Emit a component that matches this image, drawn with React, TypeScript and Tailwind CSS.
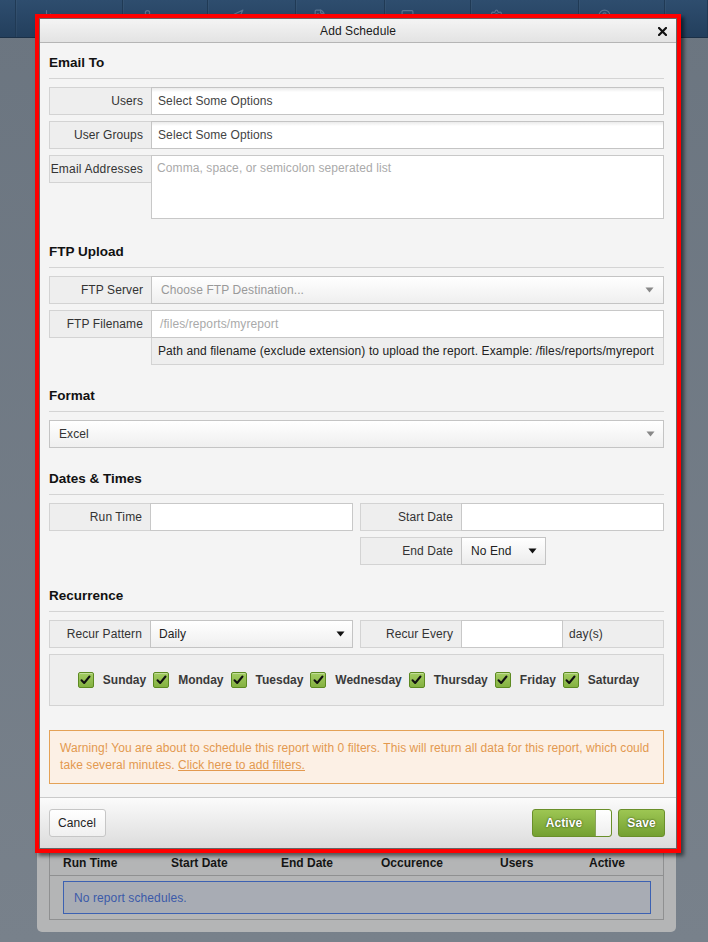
import React from "react";
import { User, Navigation, FileText, Monitor, Settings, CircleUser, BarChart2 } from "lucide-react";

const navItems = [
  { w: 16, pl: 0, Icon: null },
  { w: 107, pl: 24, Icon: BarChart2 },
  { w: 85, pl: 18, Icon: User },
  { w: 88, pl: 23, Icon: Navigation },
  { w: 89, pl: 17, Icon: FileText },
  { w: 86, pl: 16, Icon: Monitor },
  { w: 108, pl: 19, Icon: Settings },
  { w: 86, pl: 19, Icon: CircleUser },
  { w: 43, pl: 0, Icon: null },
];

function SectionHeading({ title }: { title: string }) {
  return (
    <div>
      <h3 className="text-[13.5px] leading-[18px] font-bold text-[#111] tracking-normal">{title}</h3>
      <div className="mt-[6px] mb-[8px] h-px bg-[#d4d4d4]" />
    </div>
  );
}

function Label({ children, w = "w-[102px]", alignTop = false }: { children: React.ReactNode; w?: string; alignTop?: boolean }) {
  return (
    <div
      className={`${w} shrink-0 h-[28px] bg-[#eeeeee] border border-r-0 border-[#d3d3d3] flex items-center justify-end pr-[8px] text-[12px] text-[#333] whitespace-nowrap ${alignTop ? "self-start" : ""}`}
    >
      {children}
    </div>
  );
}

function Caret({ color = "#888" }: { color?: string }) {
  return (
    <svg width="9" height="6" viewBox="0 0 9 6" className="shrink-0">
      <path d="M0.5 0.5 L8.5 0.5 L4.5 5.5 Z" fill={color} />
    </svg>
  );
}

function Checkbox() {
  return (
    <span className="w-[16px] h-[16px] shrink-0 rounded-[2px] border border-[#5d8a21] bg-[linear-gradient(#a3cc62,#84b141)] flex items-center justify-center shadow-[inset_0_1px_0_rgba(255,255,255,0.35)]">
      <svg width="11" height="10" viewBox="0 0 11 10">
        <path d="M1.5 5.2 L4.2 8 L9.5 1.5" fill="none" stroke="#111" strokeWidth="2" strokeLinecap="round" strokeLinejoin="round" />
      </svg>
    </span>
  );
}

const days = ["Sunday", "Monday", "Tuesday", "Wednesday", "Thursday", "Friday", "Saturday"];

export default function App() {
  return (
    <div className="relative min-h-[942px] w-full overflow-hidden bg-[linear-gradient(#6b7580,#78818b)] font-['Liberation_Sans',Arial,sans-serif] tracking-[0.1px]">
      {/* top navigation */}
      <nav className="h-[38px] flex bg-[linear-gradient(#2e4d6e,#233f5d)] border-b border-[#1b3047]">
        {navItems.map((it, i) => (
          <div
            key={i}
            style={{ width: it.w, paddingLeft: it.pl }}
            className="h-full shrink-0 border-r border-[#203a55] shadow-[1px_0_0_rgba(255,255,255,0.04)] pt-[9px]"
          >
            {it.Icon && <it.Icon size={13} strokeWidth={2.2} className="text-[#6f86a0] opacity-70" />}
          </div>
        ))}
      </nav>

      {/* page panel behind the dialog */}
      <div className="ml-[37px] mt-[12px] w-[639px] h-[882px] rounded-b-[5px] bg-[#b4b5b6] flex flex-col justify-end px-[12px] pb-[12px]">
        <div className="border-x border-b border-[#8f9091]">
          <div className="h-[25px] grid grid-cols-[108px_110px_100px_119px_89px_1fr] pl-[13px] items-center border-b border-[#8f9091] text-[12px] font-bold text-[#151515] tracking-normal">
            <span>Run Time</span>
            <span>Start Date</span>
            <span>End Date</span>
            <span>Occurence</span>
            <span>Users</span>
            <span>Active</span>
          </div>
          <div className="px-[12px] pt-[5px] pb-[5px]">
            <div className="h-[33px] ml-px border border-[#3c61b2] bg-[#a8acb4] flex items-center pl-[10px] text-[12px] text-[#3b5aa9]">
              No report schedules.
            </div>
          </div>
        </div>
      </div>

      {/* dialog */}
      <div className="absolute left-[35px] top-[14px] w-[646px] border-4 border-[#ff0000] shadow-[3px_3px_4px_rgba(0,0,0,0.55)]">
        <div className="border border-[#666] bg-[#f4f4f4]">
          <div className="relative h-[24px] bg-[linear-gradient(#f4f4f4,#e3e3e3)] border-b border-[#b5b5b5] flex items-center justify-center text-[12px] text-[#1a1a1a]">
            Add Schedule
            <button className="absolute right-[9px] top-[7px] w-[10px] h-[10px] flex items-center justify-center">
              <svg width="9" height="9" viewBox="0 0 9 9">
                <path d="M1 1 L8 8 M8 1 L1 8" stroke="#111" strokeWidth="2.2" strokeLinecap="square" />
              </svg>
            </button>
          </div>

          <div className="pl-[9px] pr-[12px] pt-[11px] pb-[13px]">
            {/* Email To */}
            <SectionHeading title="Email To" />
            <div className="flex flex-col gap-[6px]">
              <div className="flex h-[28px]">
                <Label>Users</Label>
                <div className="flex-1 border border-[#c4c4c4] bg-[linear-gradient(#ececec_1%,#ffffff_16%)] flex items-center pl-[6px] text-[12px] text-[#444]">
                  Select Some Options
                </div>
              </div>
              <div className="flex h-[28px]">
                <Label>User Groups</Label>
                <div className="flex-1 border border-[#c4c4c4] bg-[linear-gradient(#ececec_1%,#ffffff_16%)] flex items-center pl-[6px] text-[12px] text-[#444]">
                  Select Some Options
                </div>
              </div>
              <div className="flex">
                <Label alignTop>
                  <span className="tracking-[0.2px]">Email Addresses</span>
                </Label>
                <div className="flex-1 h-[64px] border border-[#c8c8c8] bg-white pl-[5px] pt-[4px] text-[12px] leading-[16px] text-[#aaa]">
                  Comma, space, or semicolon seperated list
                </div>
              </div>
            </div>

            {/* FTP Upload */}
            <div className="mt-[24px]">
              <SectionHeading title="FTP Upload" />
              <div className="flex h-[28px]">
                <Label>FTP Server</Label>
                <div className="flex-1 border border-[#c4c4c4] bg-[linear-gradient(#ffffff,#efefef)] flex items-center justify-between pl-[9px] pr-[9px] text-[12px] text-[#999]">
                  <span>Choose FTP Destination...</span>
                  <Caret />
                </div>
              </div>
              <div className="flex h-[28px] mt-[6px]">
                <Label>FTP Filename</Label>
                <div className="flex-1 border border-[#c8c8c8] bg-white flex items-center pl-[8px] text-[12px] text-[#aaa]">
                  /files/reports/myreport
                </div>
              </div>
              <div className="ml-[102px] h-[27px] border border-t-0 border-[#d3d3d3] bg-[#eeeeee] flex items-center pl-[6px] text-[12px] text-[#222] tracking-[0.09px] whitespace-nowrap">
                Path and filename (exclude extension) to upload the report. Example: /files/reports/myreport
              </div>
            </div>

            {/* Format */}
            <div className="mt-[22px]">
              <SectionHeading title="Format" />
              <div className="h-[28px] border border-[#c4c4c4] bg-[linear-gradient(#ffffff,#efefef)] flex items-center justify-between pl-[9px] pr-[8px] text-[12px] text-[#333]">
                <span>Excel</span>
                <Caret />
              </div>
            </div>

            {/* Dates & Times */}
            <div className="mt-[22px]">
              <SectionHeading title="Dates &amp; Times" />
              <div className="grid grid-cols-2 gap-x-[7px] gap-y-[6px]">
                <div className="flex h-[28px]">
                  <Label w="w-[101px]">Run Time</Label>
                  <div className="flex-1 border border-[#c8c8c8] bg-white" />
                </div>
                <div className="flex h-[28px]">
                  <Label w="w-[101px]">Start Date</Label>
                  <div className="flex-1 border border-[#c8c8c8] bg-white" />
                </div>
                <div />
                <div className="flex h-[28px]">
                  <Label w="w-[101px]">End Date</Label>
                  <div className="w-[85px] border border-[#c4c4c4] bg-[linear-gradient(#ffffff,#ececec)] flex items-center justify-between pl-[9px] pr-[8px] text-[12px] text-[#222]">
                    <span>No End</span>
                    <Caret color="#111" />
                  </div>
                </div>
              </div>
            </div>

            {/* Recurrence */}
            <div className="mt-[22px]">
              <SectionHeading title="Recurrence" />
              <div className="grid grid-cols-2 gap-x-[7px]">
                <div className="flex h-[28px]">
                  <Label w="w-[101px]">Recur Pattern</Label>
                  <div className="flex-1 border border-[#c4c4c4] bg-[linear-gradient(#ffffff,#efefef)] flex items-center justify-between pl-[8px] pr-[7px] text-[12px] text-[#222]">
                    <span>Daily</span>
                    <Caret color="#111" />
                  </div>
                </div>
                <div className="flex h-[28px]">
                  <Label w="w-[101px]">Recur Every</Label>
                  <div className="w-[102px] border border-[#c8c8c8] bg-white" />
                  <div className="flex-1 border border-l-0 border-[#d3d3d3] bg-[#eeeeee] flex items-center pl-[6px] text-[12px] text-[#333]">
                    day(s)
                  </div>
                </div>
              </div>
              <div className="mt-[6px] h-[52px] border border-[#d3d3d3] bg-[#eeeeee] flex items-center justify-center gap-[7px] pl-[4px]">
                {days.map((d) => (
                  <label key={d} className="flex items-center gap-[9px] text-[12px] font-bold text-[#3a3a3a] tracking-normal">
                    <Checkbox />
                    <span>{d}</span>
                  </label>
                ))}
              </div>
            </div>

            {/* warning */}
            <div className="mt-[24px] border border-[#e4a257] bg-[#fcf0e5] px-[10px] py-[9px] text-[12px] leading-[17px] text-[#e3994f] tracking-[0.06px] whitespace-nowrap">
              Warning! You are about to schedule this report with 0 filters. This will return all data for this report, which could
              <br />
              take several minutes. <span className="underline">Click here to add filters.</span>
            </div>
          </div>

          {/* footer */}
          <div className="border-t border-[#cacaca] bg-[linear-gradient(#fbfbfb,#dcdcdc)] pl-[9px] pr-[11px] pt-[11px] pb-[11px] flex items-center justify-between">
            <button className="h-[28px] w-[57px] rounded-[3px] border border-[#c6c6c6] bg-[linear-gradient(#ffffff,#f0f0f0)] text-[12px] text-[#222] text-left pl-[8px]">
              Cancel
            </button>
            <div className="flex items-center gap-[6px]">
              <div className="h-[28px] w-[80px] rounded-[3px] border border-[#6a8f2a] bg-[linear-gradient(#9dc653,#74a031)] flex overflow-hidden">
                <span className="flex-1 flex items-center justify-center text-[12px] font-bold text-white [text-shadow:0_0_2px_rgba(30,50,5,1)]">
                  Active
                </span>
                <span className="w-[16px] h-full bg-[linear-gradient(#ffffff,#eeeeee)] border-l border-[#8aa35c] rounded-r-[2px]" />
              </div>
              <button className="h-[28px] w-[47px] rounded-[3px] border border-[#6a8f2a] bg-[linear-gradient(#9dc653,#74a031)] text-[12px] font-bold text-white [text-shadow:0_0_2px_rgba(30,50,5,1)]">
                Save
              </button>
            </div>
          </div>
        </div>
      </div>
    </div>
  );
}
